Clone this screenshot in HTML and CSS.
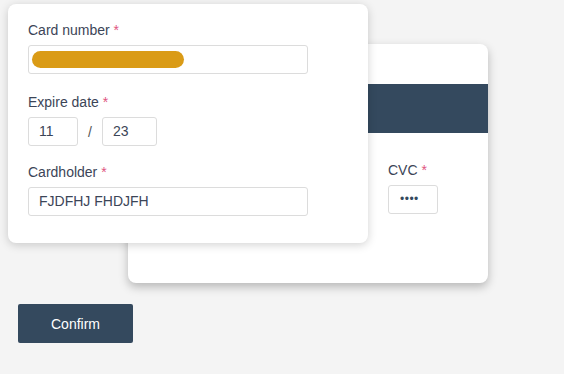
FILE: index.html
```html
<!DOCTYPE html>
<html lang="en">
<head>
    <meta charset="UTF-8">
    <meta name="viewport" content="width=device-width, initial-scale=1.0">
    <title>Payment</title>
    <link rel="stylesheet" href="styles.css">
</head>
<body>
<div class="cards">
    <div class="card card-back">
        <div class="stripe"></div>
        <div class="cvc">
            <div class="form-group">
                <label>CVC <span class="req">*</span></label>
                <div class="input input-cvc"><span class="dots">&bull;&bull;&bull;&bull;</span></div>
            </div>
        </div>
    </div>

    <div class="card card-front">
        <div class="form-group">
            <label>Card number <span class="req">*</span></label>
            <div class="input input-wide"><span class="masked"></span></div>
        </div>
        <div class="form-group form-group-expire">
            <label>Expire date <span class="req">*</span></label>
            <div class="expire">
                <div class="input input-month">11</div>
                <span class="slash">/</span>
                <div class="input input-year">23</div>
            </div>
        </div>
        <div class="form-group">
            <label>Cardholder <span class="req">*</span></label>
            <div class="input input-wide">FJDFHJ FHDJFH</div>
        </div>
    </div>
</div>

<button class="confirm">Confirm</button>
</body>
</html>
```

FILE: styles.css
```css
* {
    margin: 0;
    padding: 0;
    box-sizing: border-box;
    font-family: "Liberation Sans", Arial, sans-serif;
}

body {
    background-color: #f4f4f4;
    color: #3c4557;
}

.cards {
    position: relative;
    width: 480px;
    height: 279px;
    margin: 4px 0 0 8px;
}

.card {
    width: 360px;
    height: 239px;
    background-color: white;
    border-radius: 8px;
}

.card-front {
    position: relative;
    z-index: 2;
    padding: 18px 20px 0 20px;
    box-shadow: 0 2px 10px rgba(0, 0, 0, 0.18);
}

.card-back {
    position: absolute;
    left: 120px;
    top: 40px;
    box-shadow: 0 4px 10px rgba(0, 0, 0, 0.25);
}

.stripe {
    margin-top: 40px;
    height: 49px;
    background-color: #34495e;
}

.cvc {
    padding: 29px 0 0 260px;
}

.form-group {
    margin-bottom: 20px;
}

.form-group-expire {
    margin-bottom: 18px;
}

.form-group label {
    display: block;
    font-size: 14px;
    line-height: 16px;
    margin-bottom: 7px;
}

.req {
    color: #e0557f;
}

.input {
    height: 29px;
    border: 1px solid #dcdcdc;
    border-radius: 3px;
    background-color: white;
    font-size: 14px;
    line-height: 27px;
    padding-left: 10px;
    display: flex;
    align-items: center;
}

.input-wide {
    width: 280px;
}

.masked {
    display: block;
    width: 152px;
    height: 17px;
    margin-left: -7px;
    border-radius: 9px;
    background-color: #da9b16;
}

.expire {
    display: flex;
    align-items: center;
    height: 29px;
}

.input-month {
    width: 50px;
}

.input-year {
    width: 55px;
}

.slash {
    width: 24px;
    text-align: center;
    font-size: 14px;
    line-height: 16px;
    color: #555;
}

.input-cvc {
    width: 50px;
    padding-left: 11px;
}

.dots {
    font-size: 12px;
    letter-spacing: 0.5px;
    color: #34495e;
}

.confirm {
    display: block;
    margin: 21px 0 0 18px;
    width: 115px;
    height: 39px;
    background-color: #34495e;
    color: white;
    border: none;
    border-radius: 2px;
    font-size: 14px;
    cursor: pointer;
}
```
